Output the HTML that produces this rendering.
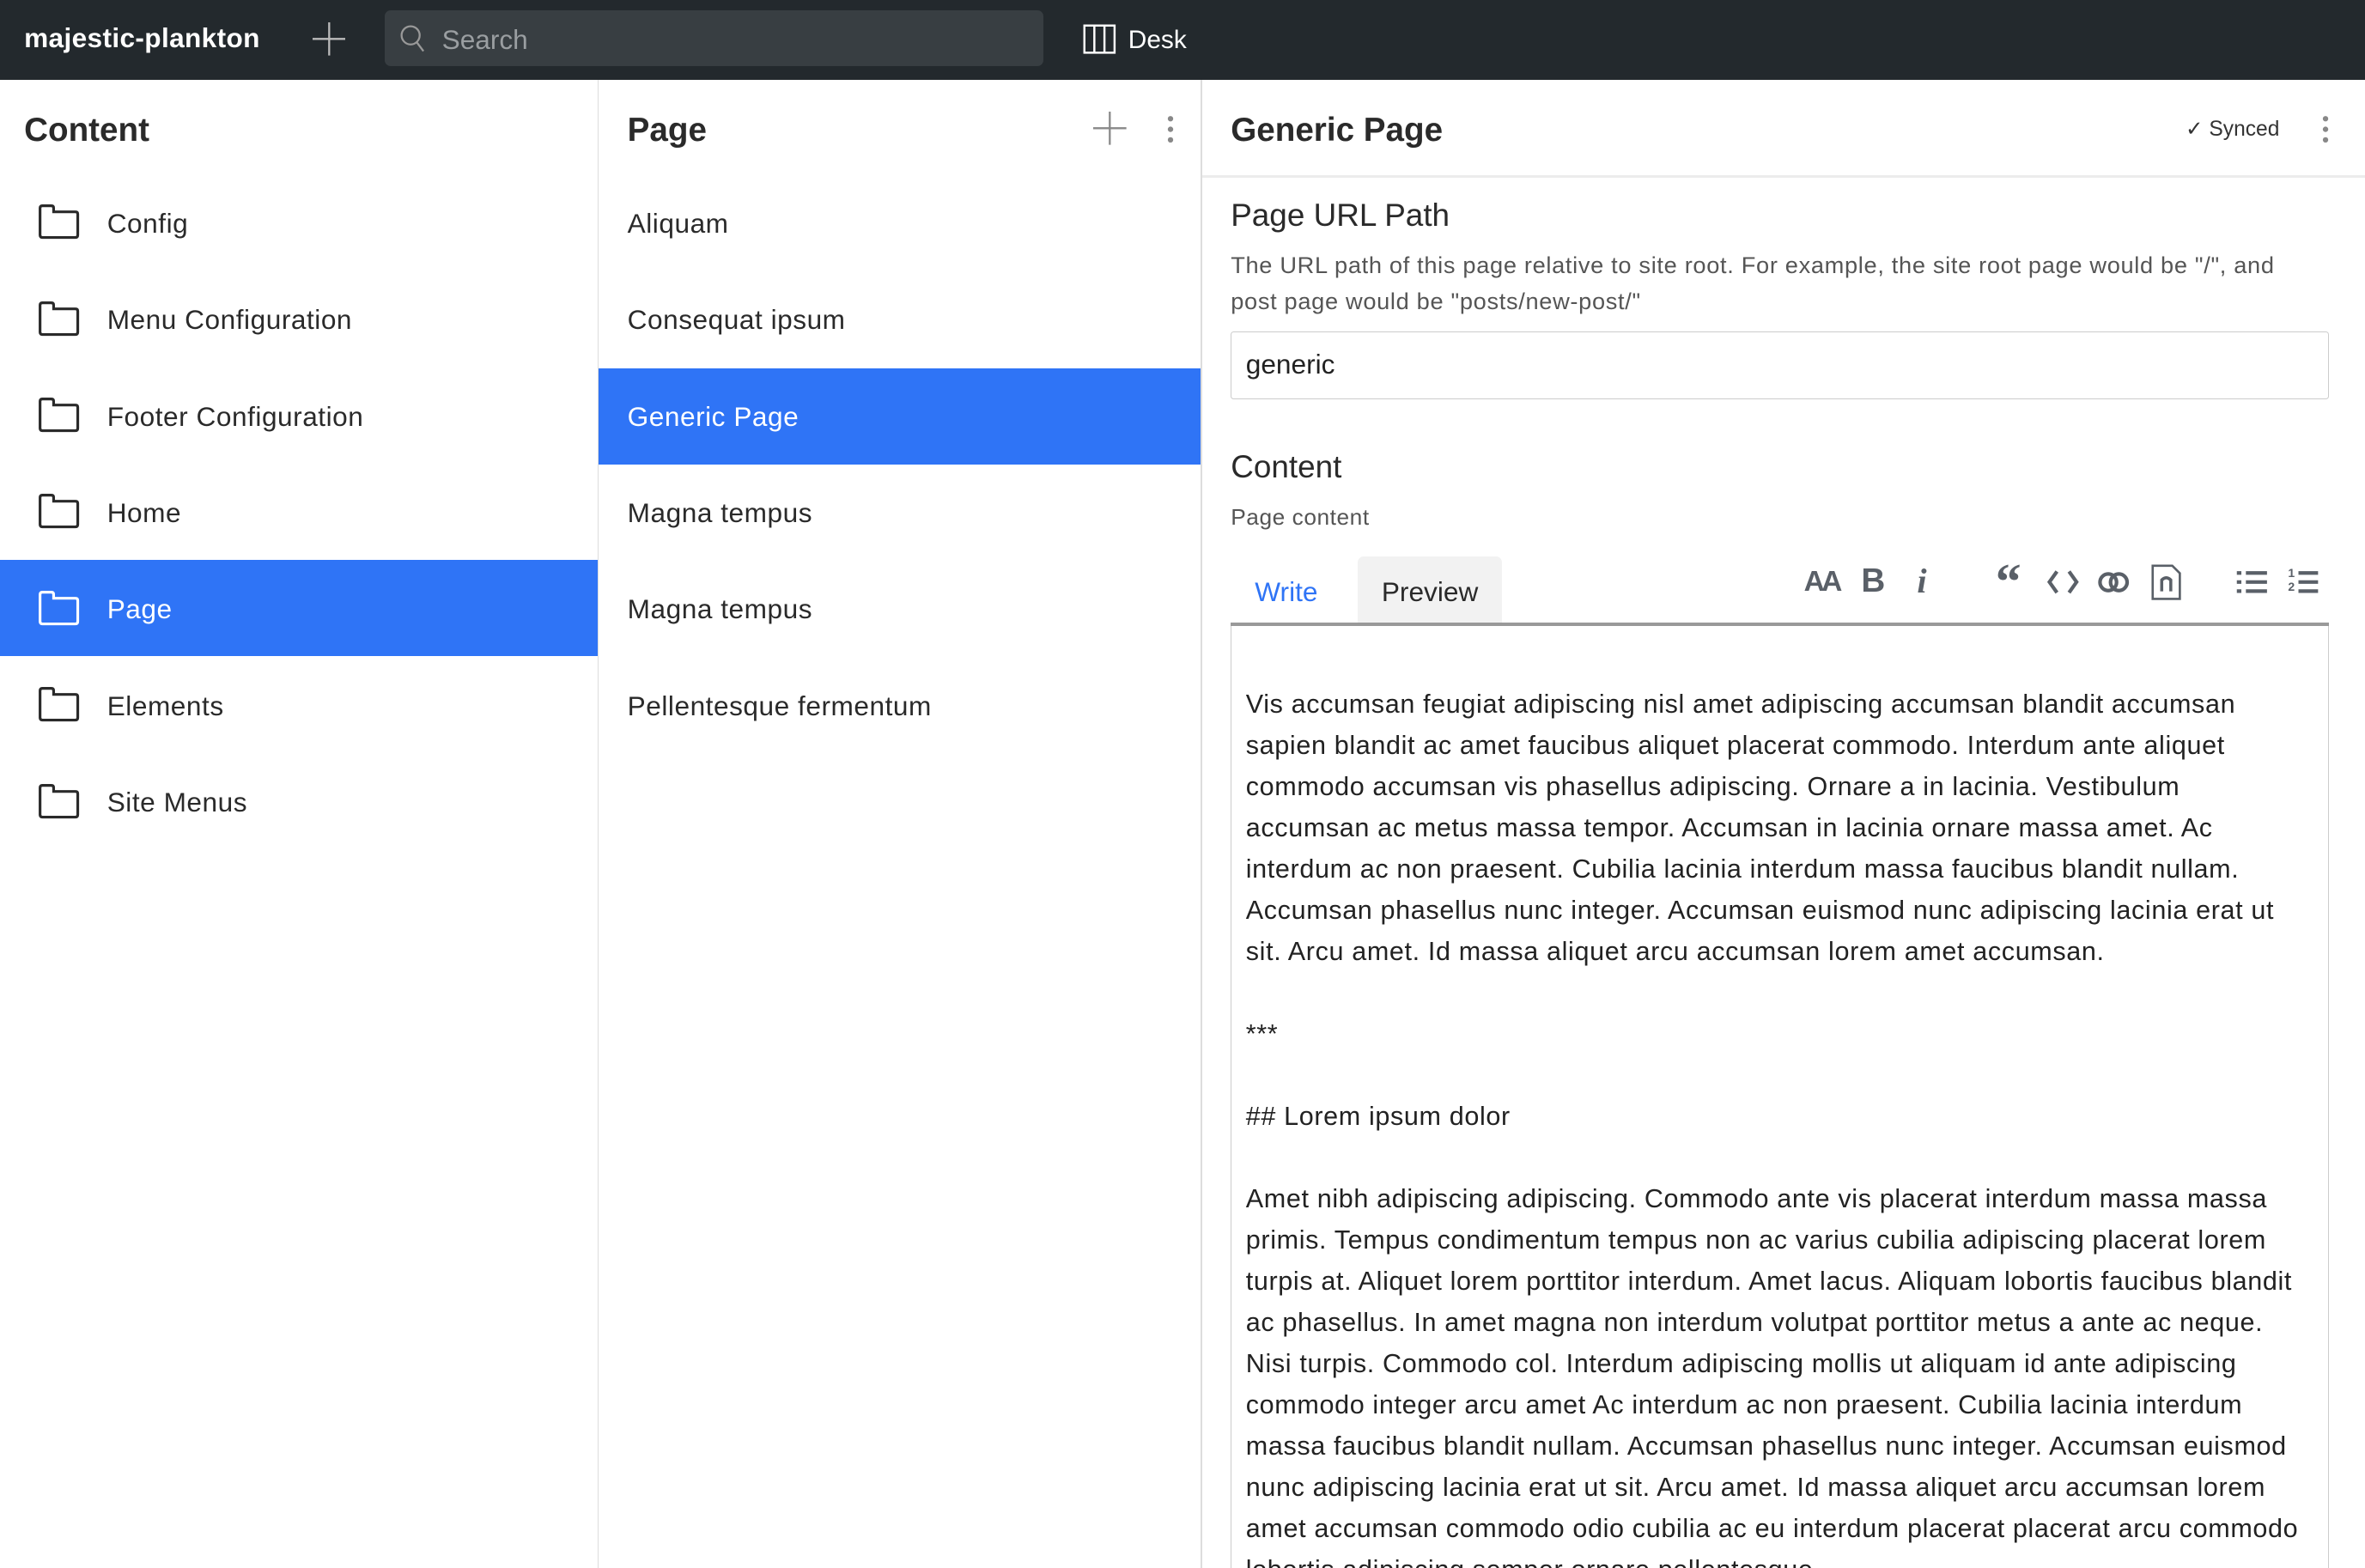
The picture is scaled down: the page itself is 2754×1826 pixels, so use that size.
<!DOCTYPE html>
<html><head><meta charset="utf-8"><style>
*{box-sizing:border-box;margin:0;padding:0}
html,body{width:2754px;height:1826px;overflow:hidden;background:#fff}
#w{zoom:1.75638;width:1568px;height:1040px;position:relative;font-family:"Liberation Sans",sans-serif;color:#2a2a2a;overflow:hidden}
.a{position:absolute;white-space:nowrap}
.top{left:0;top:0;width:1568px;height:53px;background:#23292d}
.col{top:53px;height:987px}
.h{font-size:22px;font-weight:bold;color:#2a2a2a}
.it{font-size:18px;left:0;height:64px;line-height:64px;letter-spacing:.3px}
.ed{font-size:17.4px;line-height:27.35px;color:#222;left:826px;letter-spacing:.36px}
</style></head><body><div id="w">
<div class="a top"></div>
<div class="a" style="left:16px;top:15px;color:#fff;font-size:18px;font-weight:bold;letter-spacing:.2px">majestic-plankton</div>
<svg class="a" style="left:207px;top:15px" width="22" height="22"><path d="M11 0V22M0 11H22" stroke="#bbb" stroke-width="1.3"/></svg>
<div class="a" style="left:255px;top:7px;width:437px;height:37px;background:#383e42;border-radius:4px"></div>
<svg class="a" style="left:265px;top:16px" width="18" height="20"><circle cx="7.5" cy="7.5" r="6" stroke="#999" stroke-width="1.3" fill="none"/><path d="M11.5 12L16 18" stroke="#999" stroke-width="1.3"/></svg>
<div class="a" style="left:293px;top:16px;font-size:18px;color:#9a9ea1">Search</div>
<svg class="a" style="left:718px;top:16px" width="22" height="20"><rect x="1" y="1" width="20" height="18" fill="none" stroke="#fff" stroke-width="1.4"/><path d="M7.6 1V19M14.3 1V19" stroke="#fff" stroke-width="1.4"/></svg>
<div class="a" style="left:748px;top:17px;font-size:17px;color:#fff">Desk</div>

<div class="a col" style="left:396px;width:1px;background:#ddd"></div>
<div class="a col" style="left:796px;width:1px;background:#ddd"></div>

<div class="a h" style="left:16px;top:74px">Content</div>
<div class="a" style="left:0;top:371px;width:396px;height:64px;background:#2f74f6"></div>
<div id="c1"></div>

<div class="a h" style="left:416px;top:74px">Page</div>
<svg class="a" style="left:725px;top:74px" width="22" height="22"><path d="M11 0V22M0 11H22" stroke="#888" stroke-width="1.3"/></svg>
<svg class="a" style="left:772px;top:76px" width="8" height="20"><circle cx="4" cy="3" r="1.8" fill="#888"/><circle cx="4" cy="10" r="1.8" fill="#888"/><circle cx="4" cy="17" r="1.8" fill="#888"/></svg>
<div class="a" style="left:397px;top:244px;width:399px;height:64px;background:#2f74f6"></div>
<div class="a it" style="left:416px;top:116px">Aliquam</div>
<div class="a it" style="left:416px;top:180px">Consequat ipsum</div>
<div class="a it" style="left:416px;top:244px;color:#fff">Generic Page</div>
<div class="a it" style="left:416px;top:308px">Magna tempus</div>
<div class="a it" style="left:416px;top:372px">Magna tempus</div>
<div class="a it" style="left:416px;top:436px">Pellentesque fermentum</div>

<div class="a h" style="left:816px;top:74px">Generic Page</div>
<div class="a" style="left:1449px;top:77px;font-size:14px;color:#333">✓ Synced</div>
<svg class="a" style="left:1538px;top:76px" width="8" height="20"><circle cx="4" cy="3" r="1.8" fill="#888"/><circle cx="4" cy="10" r="1.8" fill="#888"/><circle cx="4" cy="17" r="1.8" fill="#888"/></svg>
<div class="a" style="left:797px;top:116px;width:771px;height:2px;background:#ececec"></div>
<div class="a" style="left:816px;top:131px;font-size:21px;color:#2a2a2a">Page URL Path</div>
<div class="a" style="left:816px;top:164px;font-size:15.5px;line-height:24px;color:#555;letter-spacing:.38px">The URL path of this page relative to site root. For example, the site root page would be "/", and<br>post page would be "posts/new-post/"</div>
<div class="a" style="left:816px;top:220px;width:728px;height:45px;border:1px solid #ccc;border-radius:2px"></div>
<div class="a" style="left:826px;top:231px;font-size:18px;color:#222">generic</div>
<div class="a" style="left:816px;top:298px;font-size:21px">Content</div>
<div class="a" style="left:816px;top:334px;font-size:15px;color:#555;letter-spacing:.3px">Page content</div>
<div class="a" style="left:900px;top:369px;width:96px;height:46px;background:#f2f2f2;border-radius:4px 4px 0 0"></div>
<div class="a" style="left:832px;top:382px;font-size:18px;color:#2f74f6">Write</div>
<div class="a" style="left:916px;top:382px;font-size:18px;color:#2a2a2a">Preview</div>
<div class="a" style="left:816px;top:413px;width:728px;height:2px;background:#999"></div>
<div class="a" style="left:816px;top:415px;width:728px;height:625px;border:1px solid #ccc;border-top:none;border-bottom:none"></div>
<div class="a" style="left:1196px;top:375px;font-size:19px;font-weight:bold;color:#5a6068;letter-spacing:-2px">AA</div>
<div class="a" style="left:1234px;top:373px;font-size:22px;font-weight:bold;color:#5a6068">B</div>
<div class="a" style="left:1271px;top:372px;font-size:23px;font-style:italic;font-weight:bold;color:#5a6068;font-family:'Liberation Serif',serif">i</div>
<div class="a" style="left:1323px;top:366px;font-size:34px;font-weight:bold;color:#5a6068;font-family:'Liberation Serif',serif">“</div>
<svg class="a" style="left:1357px;top:377px" width="22" height="18"><path d="M7 2L2 9L7 16M15 2L20 9L15 16" stroke="#5a6068" stroke-width="2.4" fill="none"/></svg>
<svg class="a" style="left:1390px;top:378px" width="24" height="16"><circle cx="8" cy="8" r="5.5" stroke="#5a6068" stroke-width="2.4" fill="none"/><circle cx="15" cy="8" r="5.5" stroke="#5a6068" stroke-width="2.4" fill="none"/></svg>
<svg class="a" style="left:1426px;top:374px" width="20" height="24"><path d="M1 1H14L19 6V23H1Z" stroke="#5a6068" stroke-width="1.5" fill="none"/><path d="M6 18V10Q10 6 14 10V18H12V11Q10 9 8 11V18Z" fill="#5a6068"/></svg>
<svg class="a" style="left:1482px;top:377px" width="22" height="18"><path d="M1 3H4M1 9H4M1 15H4" stroke="#5a6068" stroke-width="2.4"/><path d="M7 3H21M7 9H21M7 15H21" stroke="#5a6068" stroke-width="2.4"/></svg>
<div class="a" style="left:1517px;top:376px;font-size:8px;line-height:9px;font-weight:bold;color:#5a6068">1<br>2</div>
<svg class="a" style="left:1522px;top:377px" width="16" height="18"><path d="M2 3H15M2 9H15M2 15H15" stroke="#5a6068" stroke-width="2.4"/></svg>

<div class="a ed" style="top:453px">Vis accumsan feugiat adipiscing nisl amet adipiscing accumsan blandit accumsan<br>sapien blandit ac amet faucibus aliquet placerat commodo. Interdum ante aliquet<br>commodo accumsan vis phasellus adipiscing. Ornare a in lacinia. Vestibulum<br>accumsan ac metus massa tempor. Accumsan in lacinia ornare massa amet. Ac<br>interdum ac non praesent. Cubilia lacinia interdum massa faucibus blandit nullam.<br>Accumsan phasellus nunc integer. Accumsan euismod nunc adipiscing lacinia erat ut<br>sit. Arcu amet. Id massa aliquet arcu accumsan lorem amet accumsan.<br><br>***<br><br>## Lorem ipsum dolor<br><br>Amet nibh adipiscing adipiscing. Commodo ante vis placerat interdum massa massa<br>primis. Tempus condimentum tempus non ac varius cubilia adipiscing placerat lorem<br>turpis at. Aliquet lorem porttitor interdum. Amet lacus. Aliquam lobortis faucibus blandit<br>ac phasellus. In amet magna non interdum volutpat porttitor metus a ante ac neque.<br>Nisi turpis. Commodo col. Interdum adipiscing mollis ut aliquam id ante adipiscing<br>commodo integer arcu amet Ac interdum ac non praesent. Cubilia lacinia interdum<br>massa faucibus blandit nullam. Accumsan phasellus nunc integer. Accumsan euismod<br>nunc adipiscing lacinia erat ut sit. Arcu amet. Id massa aliquet arcu accumsan lorem<br>amet accumsan commodo odio cubilia ac eu interdum placerat placerat arcu commodo<br>lobortis adipiscing semper ornare pellentesque.</div>

<script>
var n=["Config","Menu Configuration","Footer Configuration","Home","Page","Elements","Site Menus"],h="";
n.forEach(function(t,i){var y=116+i*64,c=i==4?"#fff":"#2a2a2a";
h+='<svg class="a" style="left:25px;top:'+(y+19)+'px" width="28" height="24"><path d="M3 1.5H9Q10.5 1.5 10.5 3V5.5H25Q26.5 5.5 26.5 7V21Q26.5 22.5 25 22.5H3Q1.5 22.5 1.5 21V3Q1.5 1.5 3 1.5Z" fill="none" stroke="'+c+'" stroke-width="1.8"/></svg>';
h+='<div class="a it" style="left:71px;top:'+y+'px;color:'+c+'">'+t+'</div>';});
document.getElementById("c1").outerHTML=h;
</script>
</div></body></html>
